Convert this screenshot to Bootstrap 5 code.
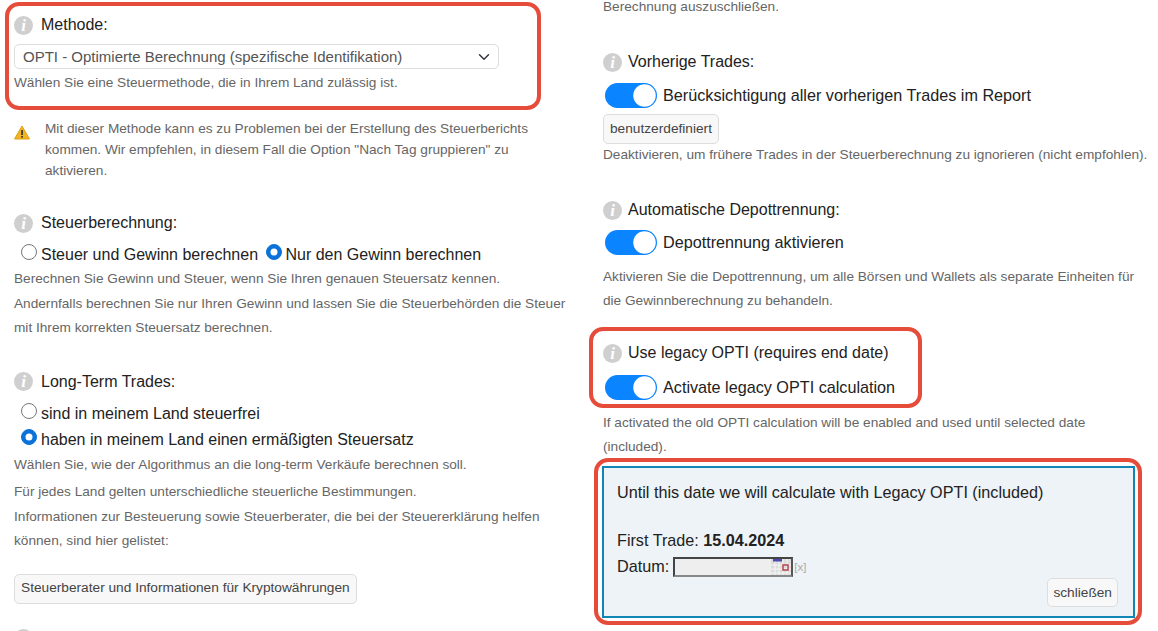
<!DOCTYPE html>
<html lang="de">

<head>
  <meta charset="UTF-8">
  <meta name="viewport" content="width=device-width, initial-scale=1.0">
  <title>Steuereinstellungen</title>
  <link rel="stylesheet" href="https://cdn.jsdelivr.net/npm/bootstrap@5.3.0/dist/css/bootstrap.min.css">
  <style>
    html, body { height: 631px; overflow: hidden; background: #fff; }
    body { font-family: "Liberation Sans", Arial, sans-serif; color: #222; font-size: 16px; }
    .col-left { width: 556px; margin-left: 14px; flex: none; }
    .col-right { width: 545px; margin-left: 33px; flex: none; }

    .red-frame { border: 4px solid #e64c3a; border-radius: 14px; }
    .frame-method { width: 536px; margin-left: -9px; margin-top: 2px; padding: 8px 5px 13px; }
    .frame-legacy { width: 333px; margin-left: -14px; margin-top: 14px; padding: 11px 10px 4px; }
    .frame-date { width: 548px; margin-left: -9px; margin-top: -1px; padding: 4px 3px 3px 4px; }

    .field-head { height: 22px; line-height: 22px; font-size: 16px; }
    .info-dot { width: 19px; height: 19px; border-radius: 50%; background: #cfcfcf; color: #fff; flex: none;
      font: italic bold 17px/19px "Liberation Serif", serif; text-align: center; margin-right: 8px; }
    .col-right .info-dot { margin-right: 6px; }
    .hint { font-size: 13.65px; color: #666; line-height: 20px; margin: 0; }
    .hint-wide { line-height: 24.5px; }
    .hint-mid { line-height: 24px; }

    .method-select { width: 485px; height: 25px; margin-top: 8px; padding: 0 30px 0 8px; font-size: 15px; line-height: 23px;
      color: #555; border-color: #ddd; border-radius: 5px; background-position: right 6px center; }
    .warn-row { margin-top: 8px; width: 525px; }
    .warn-row svg { flex: none; margin: 7px 15px 0 0; }
    .warn-row .hint { line-height: 21px; }

    .radio-line { font-size: 16px; line-height: 24px; }
    .radio-tall { line-height: 26px; }
    .radio-line .form-check-input { width: 16px; height: 16px; margin: 0 4px 0 0; float: none; vertical-align: 0; border-color: #777; }
    .radio-line .form-check-input:checked { background-color: #0a72d8; border-color: #0a72d8; }
    .radio-line .radio-first { margin-left: 7px; }
    .radio-line .radio-next { margin-left: 4px; margin-right: 3px; }

    .slider-row { height: 25px; line-height: 25px; padding: 0; margin: 0; min-height: 0; font-size: 16.2px; }
    .slider-row .form-check-input { width: 52px; height: 25px; margin: 0 6px 0 2px; float: none; border: 0;
      background-color: #0a84ff;
      background-image: url("data:image/svg+xml,%3csvg xmlns='http://www.w3.org/2000/svg' viewBox='-4 -4 8 8'%3e%3ccircle r='3.6' fill='%23fff'/%3e%3c/svg%3e"); }
    .plain-btn { background: #f8f8f8; border: 1px solid #ddd; border-radius: 5px; color: #444; font-size: 13.7px; height: 30px; padding: 0 6px; }

    .mt-1px { margin-top: 1px; }
    .mt-3px { margin-top: 3px; }
    .mt-6px { margin-top: 6px; }
    .mt-9px { margin-top: 9px; }
    .mt-10px { margin-top: 10px; }
    .mt-11px { margin-top: 11px; }
    .mt-20px { margin-top: 20px; }
    .mt-24px { margin-top: 24px; }
    .mt-30px { margin-top: 30px; }
    .mt-31px { margin-top: 31px; }
    .mt-34px { margin-top: 34px; }

    .date-panel { background: #eef3f7; border: 2px solid #0f86b5; height: 152px; padding: 12px 15px 0 13px; line-height: 24px; font-size: 16.2px; }
    .date-field { width: 120px; height: 20px; background: #eee; border: 2px solid #444; border-right-color: #555; border-bottom-color: #888; margin: 3px 0 0 4px; position: relative; }
    .date-field svg { position: absolute; right: 0; top: 0; }
    .clear-x { font-size: 11.5px; color: #aaa; margin: 3px 0 0 1px; }
    .close-row { margin-top: -1px; }
    .close-btn { height: 29px; padding: 0 5px; }
  </style>
</head>

<body>
  <div class="d-flex">

    <div class="col-left">
      <div class="red-frame frame-method">
        <div class="field-head d-flex align-items-center"><span class="info-dot">i</span>Methode:</div>
        <select class="form-select method-select">
          <option>OPTI - Optimierte Berechnung (spezifische Identifikation)</option>
        </select>
        <p class="hint mt-1">Wählen Sie eine Steuermethode, die in Ihrem Land zulässig ist.</p>
      </div>

      <div class="warn-row d-flex">
        <svg width="16" height="15" viewBox="0 0 16 15">
          <path d="M8 1 15.5 14H.5Z" fill="#f2b423" stroke="#e0a010" stroke-linejoin="round"/>
          <rect x="7.2" y="5" width="1.7" height="5" fill="#333"/>
          <rect x="7.2" y="11" width="1.7" height="1.7" fill="#333"/>
        </svg>
        <p class="hint">Mit dieser Methode kann es zu Problemen bei der Erstellung des Steuerberichts kommen. Wir empfehlen, in diesem Fall die Option "Nach Tag gruppieren" zu aktivieren.</p>
      </div>

      <div class="field-head d-flex align-items-center mt-31px"><span class="info-dot">i</span>Steuerberechnung:</div>
      <div class="radio-line mt-9px">
        <input class="form-check-input radio-first" type="radio" name="calc">Steuer und Gewinn berechnen
        <input class="form-check-input radio-next" type="radio" name="calc" checked>Nur den Gewinn berechnen
      </div>
      <p class="hint hint-wide">Berechnen Sie Gewinn und Steuer, wenn Sie Ihren genauen Steuersatz kennen.<br>Andernfalls berechnen Sie nur Ihren Gewinn und lassen Sie die Steuerbehörden die Steuer mit Ihrem korrekten Steuersatz berechnen.</p>

      <div class="field-head d-flex align-items-center mt-30px"><span class="info-dot">i</span>Long-Term Trades:</div>
      <div class="radio-line radio-tall mt-2">
        <input class="form-check-input radio-first" type="radio" name="longterm">sind in meinem Land steuerfrei<br>
        <input class="form-check-input radio-first" type="radio" name="longterm" checked>haben in meinem Land einen ermäßigten Steuersatz
      </div>
      <p class="hint hint-wide">Wählen Sie, wie der Algorithmus an die long-term Verkäufe berechnen soll.</p>
      <p class="hint hint-wide mt-3px">Für jedes Land gelten unterschiedliche steuerliche Bestimmungen.<br>Informationen zur Besteuerung sowie Steuerberater, die bei der Steuererklärung helfen können, sind hier gelistet:</p>
      <button class="plain-btn mt-20px" type="button">Steuerberater und Informationen für Kryptowährungen</button>
      <div class="field-head d-flex align-items-center mt-24px"><span class="info-dot"></span></div>
    </div>

    <div class="col-right">
      <p class="hint" style="margin-top:-3px">Berechnung auszuschließen.</p>

      <div class="field-head d-flex align-items-center mt-34px"><span class="info-dot">i</span>Vorherige Trades:</div>
      <div class="form-check form-switch slider-row mt-10px d-flex align-items-center">
        <input class="form-check-input" type="checkbox" checked>Berücksichtigung aller vorherigen Trades im Report
      </div>
      <button class="plain-btn mt-6px d-block" type="button">benutzerdefiniert</button>
      <p class="hint mt-1px">Deaktivieren, um frühere Trades in der Steuerberechnung zu ignorieren (nicht empfohlen).</p>

      <div class="field-head d-flex align-items-center mt-34px"><span class="info-dot">i</span>Automatische Depottrennung:</div>
      <div class="form-check form-switch slider-row mt-9px d-flex align-items-center">
        <input class="form-check-input" type="checkbox" checked>Depottrennung aktivieren
      </div>
      <p class="hint hint-mid mt-10px">Aktivieren Sie die Depottrennung, um alle Börsen und Wallets als separate Einheiten für die Gewinnberechnung zu behandeln.</p>

      <div class="red-frame frame-legacy">
        <div class="field-head d-flex align-items-center"><span class="info-dot">i</span>Use legacy OPTI (requires end date)</div>
        <div class="form-check form-switch slider-row mt-11px d-flex align-items-center">
          <input class="form-check-input" type="checkbox" checked>Activate legacy OPTI calculation
        </div>
      </div>
      <p class="hint hint-mid mt-3px">If activated the old OPTI calculation will be enabled and used until selected date (included).</p>

      <div class="red-frame frame-date">
        <div class="date-panel">
          <div>Until this date we will calculate with Legacy OPTI (included)</div>
          <div class="mt-4">First Trade: <b>15.04.2024</b></div>
          <div class="d-flex align-items-center">Datum:
            <span class="date-field d-block">
              <svg width="20" height="16" viewBox="0 0 20 16">
                <rect width="20" height="16" fill="#dcdcdc"/>
                <path d="M0 6H20M0 10H20M0 14H20M4 0V16M8 0V16M12 0V16M16 0V16" stroke="#f6f6f6"/>
                <rect x="2" y="0" width="9" height="2.5" fill="#4a4ab0"/>
                <rect x="12" y="6" width="5" height="5" fill="none" stroke="#b5444c" stroke-width="1.5"/>
              </svg>
            </span>
            <span class="clear-x">[x]</span>
          </div>
          <div class="close-row d-flex justify-content-end">
            <button class="plain-btn close-btn" type="button">schließen</button>
          </div>
        </div>
      </div>
    </div>

  </div>
  <script src="https://cdn.jsdelivr.net/npm/bootstrap@5.3.0/dist/js/bootstrap.bundle.min.js"></script>
</body>

</html>
